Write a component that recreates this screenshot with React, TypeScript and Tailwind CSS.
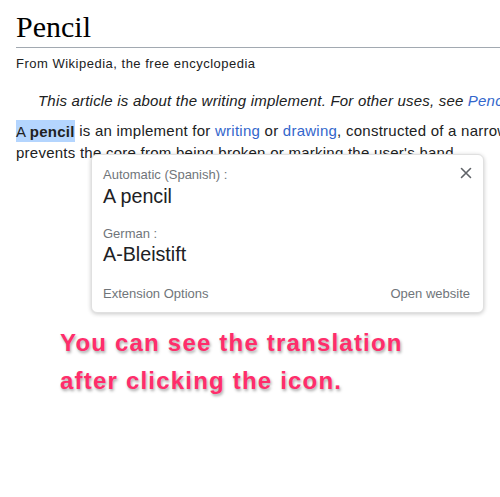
const sans = 'font-["Liberation_Sans",Arial,sans-serif]';

function CloseIcon() {
  return (
    <svg width="12" height="12" viewBox="0 0 12 12" className="text-[#5f6368]">
      <path d="M1.5 1.5 L10.5 10.5 M10.5 1.5 L1.5 10.5" stroke="currentColor" strokeWidth="1.6" strokeLinecap="round" />
    </svg>
  );
}

function TranslationPopup() {
  return (
    <div className={`absolute left-[91px] top-[154px] w-[393px] h-[159px] rounded-[6px] border border-[#e0e0e0] bg-white shadow-[0_1px_4px_rgba(0,0,0,0.22)] pl-[11px] pr-[13px] pt-[12px] ${sans}`}>
      <button className="absolute right-[11px] top-[12px] p-0">
        <CloseIcon />
      </button>
      <div className="text-[13px] leading-[16px] text-[#70757a]">Automatic (Spanish) :</div>
      <div className="mt-[1px] text-[19.7px] leading-[24px] text-[#202124]">A pencil</div>
      <div className="mt-[18px] text-[13px] leading-[16px] text-[#70757a]">German :</div>
      <div className="text-[19.7px] leading-[24px] text-[#202124]">A-Bleistift</div>
      <div className="mt-[20px] flex justify-between text-[13px] leading-[16px] text-[#70757a]">
        <span>Extension Options</span>
        <span>Open website</span>
      </div>
    </div>
  );
}

export default function App() {
  return (
    <div className="relative w-[500px] h-[497px] overflow-hidden bg-white">
      <div className="pl-4 text-[#202122]">
        <h1 className='pt-[9px] pb-[2px] border-b border-[#a2a9b1] font-["Liberation_Serif","Times_New_Roman",serif] text-[30px] leading-[36px] text-black'>
          Pencil
        </h1>
        <div className={`mt-[6px] text-[13px] leading-[20px] tracking-[0.5px] text-[#202122] ${sans}`}>
          From Wikipedia, the free encyclopedia
        </div>
        <div className={`mt-[16px] pl-[22px] whitespace-nowrap italic text-[15px] leading-[22px] tracking-[0.2px] ${sans}`}>
          This article is about the writing implement. For other uses, see{' '}
          <a className="text-[#3366cc]">Pencil (disambiguation)</a>.
        </div>
        <div className={`mt-[8px] whitespace-nowrap text-[15px] leading-[22px] tracking-[0.25px] ${sans}`}>
          <div>
            <span className="bg-[#b4d5fe] py-[2.5px]">
              A <b className="font-bold">pencil</b>
            </span>{' '}
            is an implement for <a className="text-[#3366cc]">writing</a> or{' '}
            <a className="text-[#3366cc]">drawing</a>, constructed of a narrow, solid pigment core in a protective casing that
          </div>
          <div>prevents the core from being broken or marking the user&apos;s hand.</div>
        </div>
        <div
          className={`mt-[160px] ml-[44px] text-[24px] leading-[38px] font-bold tracking-[1.2px] text-[#ff2d6b] [-webkit-text-stroke:4px_white] [paint-order:stroke_fill] [text-shadow:1px_2px_3px_rgba(0,0,0,0.35)] ${sans}`}
        >
          <div>You can see the translation</div>
          <div>after clicking the icon.</div>
        </div>
      </div>
      <TranslationPopup />
    </div>
  );
}
